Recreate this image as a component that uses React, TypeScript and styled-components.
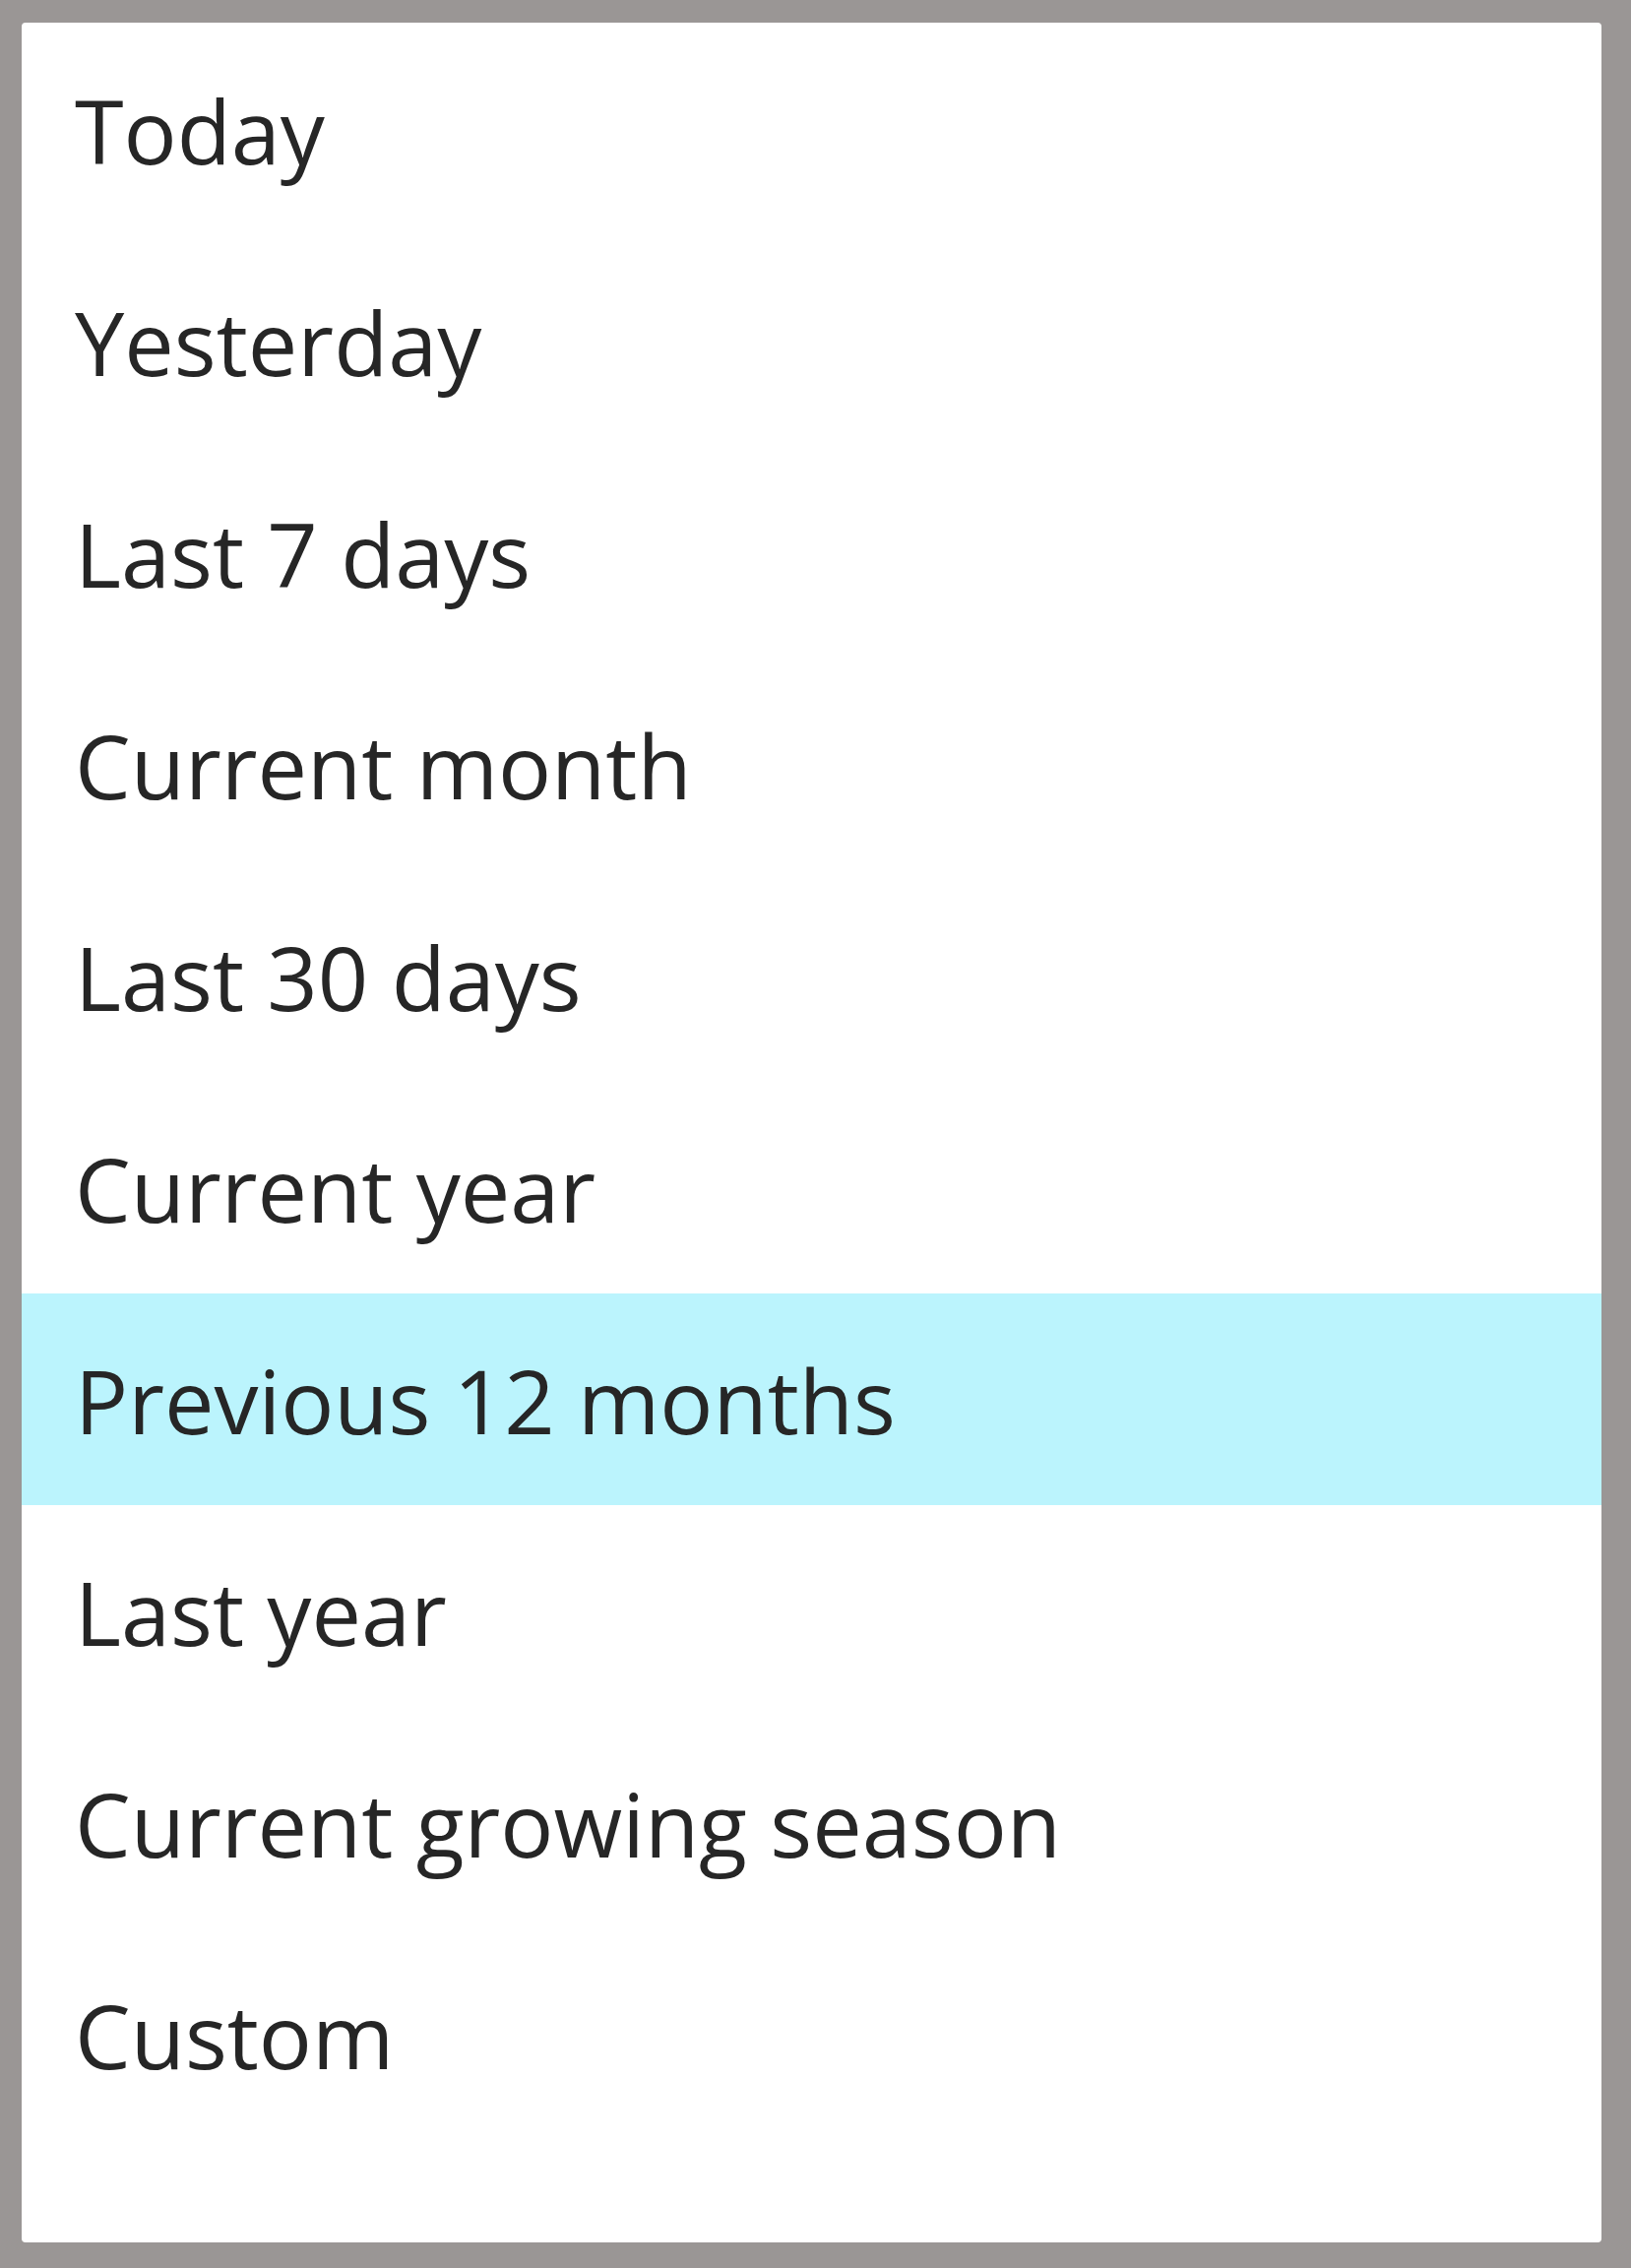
import React from 'react';
import styled, { createGlobalStyle } from 'styled-components';

const GlobalStyle = createGlobalStyle`
  html, body {
    margin: 0;
    padding: 0;
    background: #9a9695;
  }
  body {
    font-family: "Open Sans", "Noto Sans", sans-serif;
  }
`;

const options = [
  'Today',
  'Yesterday',
  'Last 7 days',
  'Current month',
  'Last 30 days',
  'Current year',
  'Previous 12 months',
  'Last year',
  'Current growing season',
  'Custom',
];

const Page = styled.div`
  width: 1657px;
  height: 2304px;
  box-sizing: border-box;
  padding: 23px 30px 26px 22px;
  display: flex;
`;

const Menu = styled.ul`
  flex: 1;
  margin: 0;
  padding: 1px 0 105px;
  list-style: none;
  background: #ffffff;
  border-radius: 4px;
  overflow: hidden;
`;

const Item = styled.li<{ $active?: boolean }>`
  height: 215px;
  display: flex;
  align-items: center;
  padding-left: 54px;
  font-size: 90px;
  color: #262626;
  background: ${(p) => (p.$active ? '#bbf4fd' : 'transparent')};
  white-space: nowrap;
`;

const App = () => {
  return (
    <>
      <GlobalStyle />
      <Page>
        <Menu>
          {options.map((o) => (
            <Item key={o} $active={o === 'Previous 12 months'}>
              {o}
            </Item>
          ))}
        </Menu>
      </Page>
    </>
  );
};

export default App;
